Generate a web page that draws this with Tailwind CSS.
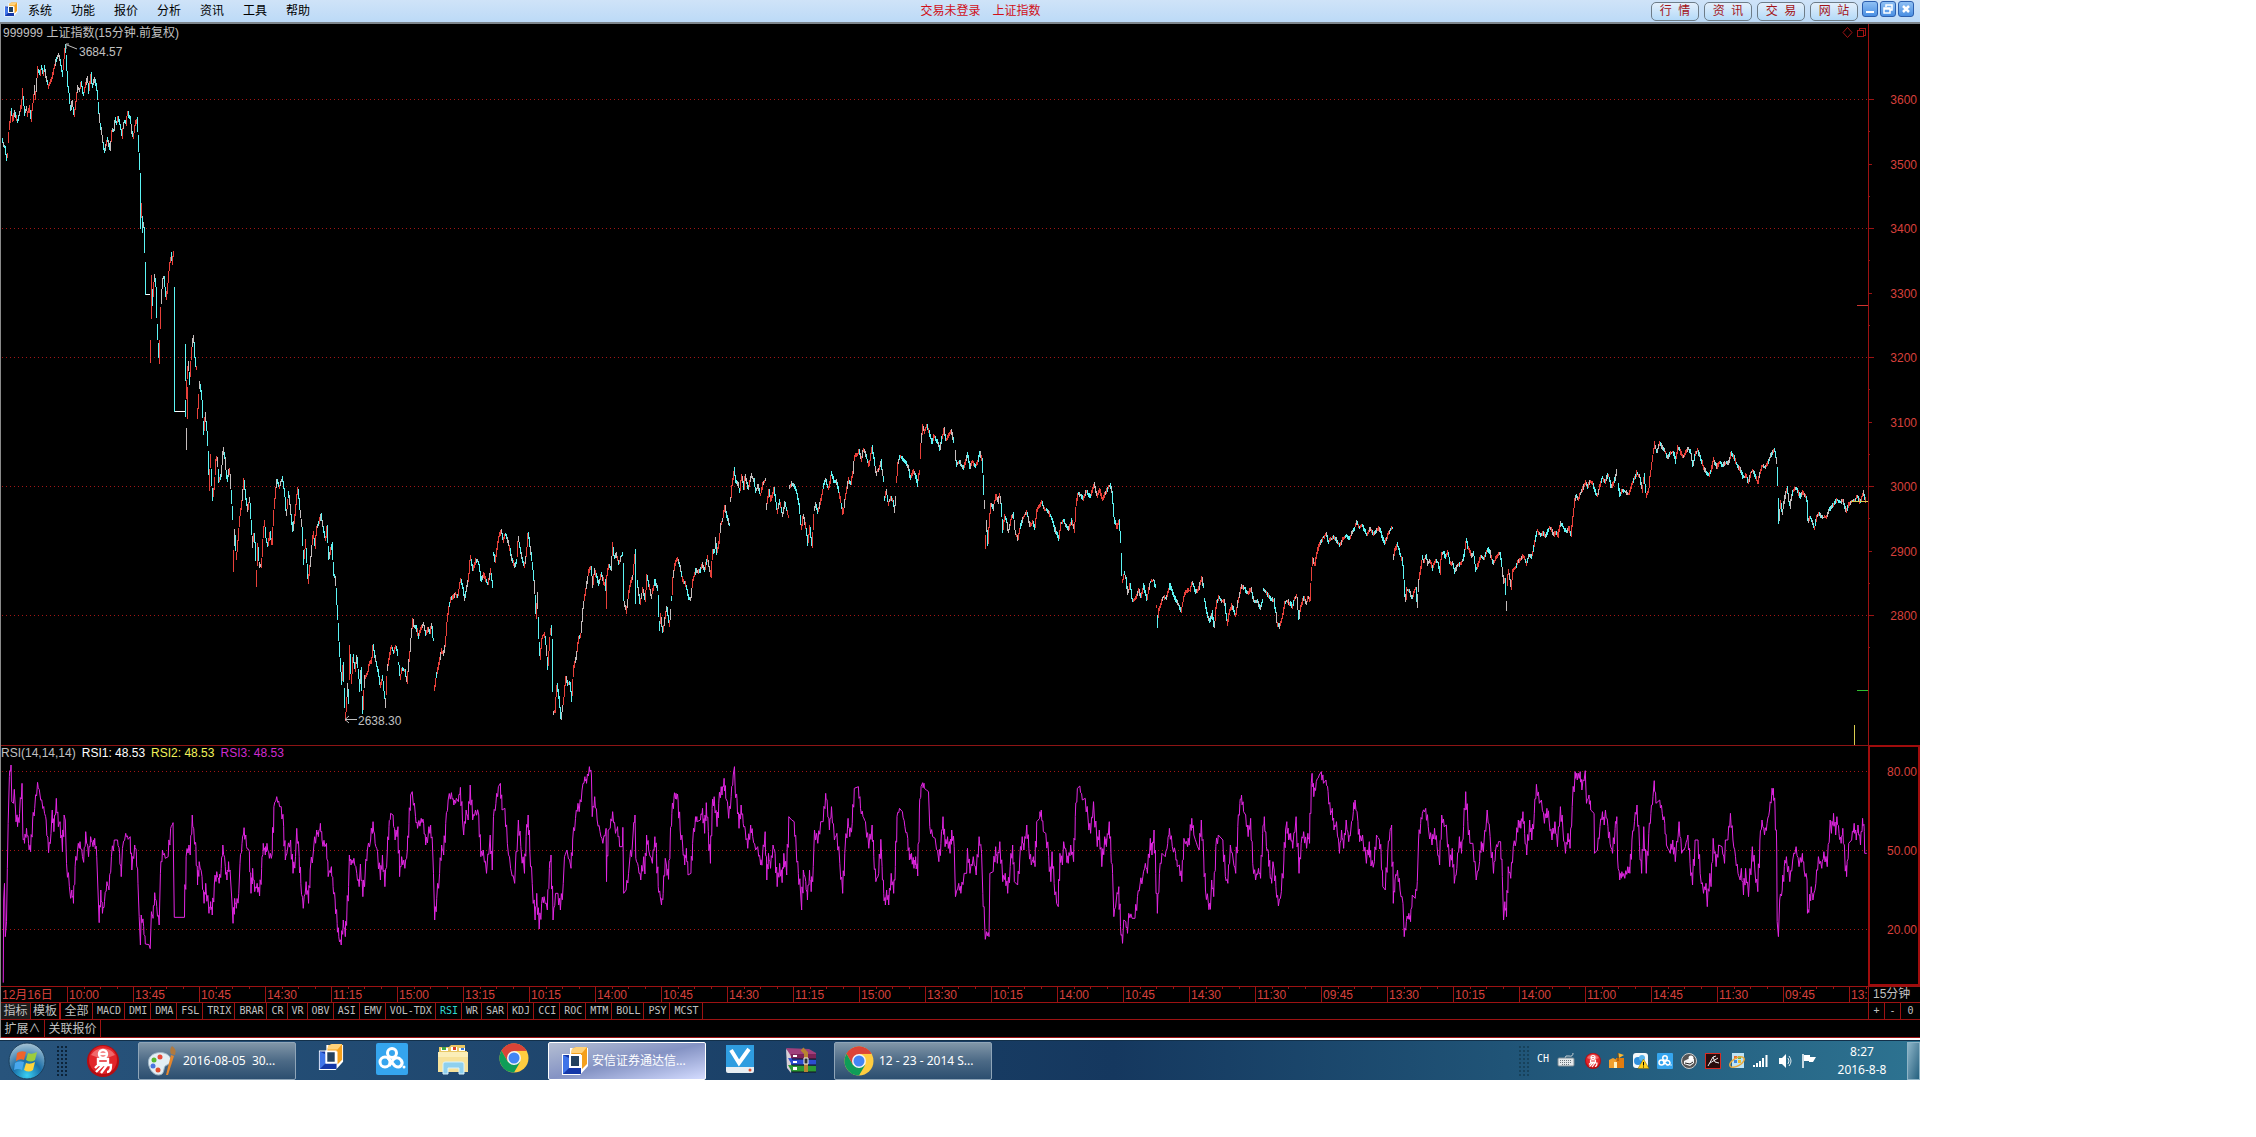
<!DOCTYPE html>
<html lang="zh-CN">
<head>
    <meta charset="UTF-8">
    <meta name="viewport" content="width=device-width, initial-scale=1.0">
    <title>上证指数 15分钟</title>
    <script src="https://cdn.jsdelivr.net/npm/@tailwindcss/browser@4"></script>
</head>
<body class="bg-white">

<!-- Shared icons -->
<svg class="hidden">
    <symbol id="icon-tdx" viewBox="0 0 28 30">
        <path d="M1 8H9V2H27V20L19 29H1Z" fill="#fff"/>
        <path d="M11 3L15 1H26V18L21 23V9H10Z" fill="#f5a01c"/>
        <path d="M11 3L15 1H26L21 7H10Z" fill="#ffd27a"/>
        <path d="M2 9H8V22H20V28H2Z" fill="#1437a8"/>
        <path d="M2 9L8 12V22L2 28Z" fill="#3f74e8"/>
        <path d="M9 9H19V21H9Z" fill="#24415f"/>
        <path d="M9 9H19V21H9Z" fill="none" stroke="#fff" stroke-width="2"/>
    </symbol>
    <symbol id="icon-chrome" viewBox="0 0 30 30">
        <circle cx="15" cy="15" r="14.500" fill="#ffcd40"/>
        <path d="M15 15L2.500 7.700A14.500 14.500 0 0 1 27.500 7.700H15Z" fill="#db4437"/>
        <path d="M15 7.700H27.500A14.500 14.500 0 0 0 2.500 7.700L8.700 18.600Z" fill="#db4437"/>
        <path d="M2.500 7.700A14.500 14.500 0 0 0 15 29.500L21.300 18.700L15 21.500L8.700 18.600Z" fill="#0f9d58"/>
        <circle cx="15" cy="15" r="7" fill="#f4f4f4"/>
        <circle cx="15" cy="15" r="5.500" fill="#4285f4"/>
    </symbol>
    <symbol id="icon-pan" viewBox="0 0 32 32">
        <rect width="32" height="32" rx="2" fill="#35a5ee"/>
        <g fill="none" stroke="#fff" stroke-width="3">
            <circle cx="16" cy="10" r="4.500"/>
            <circle cx="9" cy="19" r="5"/>
            <path d="M12 15L19 23C24 26 28 21 25 17C23 14 19 14 17 17L13 23"/>
        </g>
        <circle cx="28" cy="24" r="1.500" fill="#fff"/>
    </symbol>
    <symbol id="icon-yi" viewBox="0 0 32 32">
        <circle cx="16" cy="16" r="16" fill="#b50d12"/>
        <circle cx="16" cy="15" r="14" fill="#e2252a"/>
        <path d="M4 10A14 14 0 0 1 28 10Q16 16 4 10" fill="#f0696b"/>
        <g fill="none" stroke="#fff" stroke-width="2.400">
            <circle cx="16" cy="9" r="4"/>
            <path d="M12 9H19M11 14H21V18H11ZM12 19L8 23M10 20H24Q24 27 20 27M16 20L9 27M20 20L14 28"/>
        </g>
    </symbol>
</svg>

<div class="h-screen min-h-[700px] pr-[336px] pb-[57px] flex flex-col">
<div class="flex-1 min-h-0 flex flex-col font-['Liberation_Sans','Noto_Sans_CJK_SC',sans-serif] text-[12px] leading-4">

    <!-- Menu bar -->
    <header class="h-6 flex-none flex items-center border-b-2 border-[#7d858c] bg-linear-to-b from-[#cfe3f8] to-[#bcdaf7] text-black">
        <svg class="w-[14px] h-[15px] ml-1 mb-1" viewBox="0 0 28 30"><use href="#icon-tdx"/></svg>
        <nav class="flex gap-[19px] ml-[10px]">
            <button>系统</button>
            <button>功能</button>
            <button>报价</button>
            <button>分析</button>
            <button>资讯</button>
            <button>工具</button>
            <button>帮助</button>
        </nav>
        <div class="flex-1 flex justify-center gap-3 text-[#d01018]">
            <span>交易未登录</span>
            <span>上证指数</span>
        </div>
        <div class="flex gap-[5px] mr-1 text-[#a31418]">
            <button class="w-12 h-[19px] border border-[#6d7c88] rounded-[5px] bg-linear-to-b from-[#e3effb] to-[#b4daf8]">行&nbsp;&nbsp;情</button>
            <button class="w-12 h-[19px] border border-[#6d7c88] rounded-[5px] bg-linear-to-b from-[#e3effb] to-[#b4daf8]">资&nbsp;&nbsp;讯</button>
            <button class="w-12 h-[19px] border border-[#6d7c88] rounded-[5px] bg-linear-to-b from-[#e3effb] to-[#b4daf8]">交&nbsp;&nbsp;易</button>
            <button class="w-12 h-[19px] border border-[#6d7c88] rounded-[5px] bg-linear-to-b from-[#e3effb] to-[#b4daf8]">网&nbsp;&nbsp;站</button>
        </div>
        <div class="flex gap-[2px] mr-[6px] mb-1">
            <button aria-label="minimize" class="size-4 border border-[#2c5fae] rounded-[3px] bg-linear-to-b from-[#8fc0f4] to-[#4a8fe2]">
                <svg viewBox="0 0 14 14"><path d="M3 10H11" stroke="#fff" stroke-width="2"/></svg>
            </button>
            <button aria-label="restore" class="size-4 border border-[#2c5fae] rounded-[3px] bg-linear-to-b from-[#8fc0f4] to-[#4a8fe2]">
                <svg viewBox="0 0 14 14"><path d="M5 5V3H11V8H9M3 6H9V11H3ZM3 7H9" fill="none" stroke="#fff" stroke-width="1.500"/></svg>
            </button>
            <button aria-label="close" class="size-4 border border-[#2c5fae] rounded-[3px] bg-linear-to-b from-[#8fc0f4] to-[#4a8fe2]">
                <svg viewBox="0 0 14 14"><path d="M4 4L10 10M10 4L4 10" stroke="#fff" stroke-width="2.500"/></svg>
            </button>
        </div>
    </header>

    <main class="flex-1 min-h-0 flex flex-col bg-black border-l border-[#8a8a8a] text-[#c0c0c0]">
        <!-- Price chart -->
        <section class="flex-1 min-h-0 flex relative">
            <h1 class="absolute left-[2px] top-px z-10">999999 上证指数(15分钟.前复权)</h1>
            <svg id="price-chart" class="flex-1 min-w-0 h-full block" viewBox="1 24 1867 721" preserveAspectRatio="none"></svg>
            <svg id="price-axis" class="w-[52px] h-full block" viewBox="1868 24 52 721" preserveAspectRatio="none"></svg>
        </section>

        <!-- RSI chart -->
        <section class="h-[241px] flex-none flex relative">
            <div class="absolute left-0 top-0 z-10 flex gap-[6px]">
                <span>RSI(14,14,14)</span>
                <span class="text-white">RSI1: 48.53</span>
                <span class="text-[#f2f25a]">RSI2: 48.53</span>
                <span class="text-[#cf2bcf]">RSI3: 48.53</span>
            </div>
            <svg id="rsi-chart" class="flex-1 min-w-0 h-full block border-t border-[#8c1414]" viewBox="1 746 1867 240" preserveAspectRatio="none"></svg>
            <div class="w-[52px] border-2 border-[#a00c0c] flex-none">
                <svg id="rsi-axis" class="size-full block" viewBox="1870 747 48 237" preserveAspectRatio="none"></svg>
            </div>
        </section>

        <!-- Time axis -->
        <div class="h-4 flex-none flex border-t border-[#9c1212]">
            <svg id="time-axis" class="flex-1 min-w-0 h-full block" viewBox="1 987 1867 15" preserveAspectRatio="none"></svg>
            <div class="w-[52px] border-l border-[#9c1212] pl-1 leading-[15px]">15分钟</div>
        </div>

        <!-- Indicator tabs -->
        <div class="h-[17px] flex-none flex border-t border-[#9c1212] leading-4">
            <nav id="tabs" class="flex-1 flex font-['DejaVu_Sans_Mono','Noto_Sans_CJK_SC',monospace] text-[10px]">
                <button class="w-[30px] border-r border-[#9c1212] bg-[#1c1c1c] text-[12px]">指标</button>
                <button class="w-[30px] border-r-2 border-[#b01414] text-[12px]">模板</button>
                <button class="w-8 border-r border-[#9c1212] text-[12px]">全部</button>
            </nav>
            <div class="w-[52px] flex border-l border-[#9c1212] font-['DejaVu_Sans_Mono',monospace] text-[10px]">
                <button class="w-4 border-r border-[#9c1212]">+</button>
                <button class="w-4 border-r border-[#9c1212]">-</button>
                <button class="flex-1">0</button>
            </div>
        </div>
        <div class="h-[19px] flex-none flex border-y border-[#9c1212]">
            <button class="w-11 border-r border-[#9c1212]">扩展∧</button>
            <button class="w-14 border-r border-[#9c1212]">关联报价</button>
        </div>
    </main>

    <!-- Taskbar -->
    <footer class="h-10 mt-[2px] flex-none flex items-center border-t border-[#12304a] bg-linear-to-r from-[#28547c] via-[#15385f] via-58% to-[#2d7391] text-white font-['Noto_Sans','Noto_Sans_CJK_SC',sans-serif]">
        <button aria-label="start" class="w-[53px] flex justify-center">
            <svg class="size-[38px]" viewBox="0 0 38 38">
                <defs>
                    <radialGradient id="orb" cx=".5" cy=".9" r=".9">
                        <stop offset="0" stop-color="#39d0f2"/>
                        <stop offset=".45" stop-color="#1a6ea8"/>
                        <stop offset="1" stop-color="#a9c4d4"/>
                    </radialGradient>
                </defs>
                <circle cx="19" cy="19" r="18" fill="url(#orb)" stroke="#1c3f5c" stroke-width="1"/>
                <path d="M9 11Q13 8 18 10L16 18Q12 16 8 19Z" fill="#f0642a"/>
                <path d="M20 11Q24 13 29 10L27 18Q23 21 18 18Z" fill="#9ccc3c"/>
                <path d="M7 21Q11 18 16 20L14 28Q10 26 6 28Z" fill="#48a8ee"/>
                <path d="M18 21Q22 23 27 20L25 28Q21 31 16 28Z" fill="#ffd43c"/>
            </svg>
        </button>
        <svg class="w-[10px] h-[32px] ml-1" viewBox="0 0 10 32"><path d="M1 1V32M5 1V32M9 1V32" stroke="#0c2338" stroke-width="2" stroke-dasharray="2 2"/></svg>
        <button aria-label="易信" class="w-[71px] flex justify-center"><svg class="size-8"><use href="#icon-yi"/></svg></button>
        <button class="w-[158px] h-[38px] flex items-center gap-[6px] pl-2 border border-[#8fa5b8] rounded-[2px] bg-linear-to-b from-[#8196a8] via-[#4c6a86] to-[#2c4f70]">
            <svg class="size-[30px]" viewBox="0 0 30 30">
                <path d="M2 20C-1 10 8 5 17 7C25 9 26 17 20 19C16 20 18 25 15 28C10 31 4 27 2 20Z" fill="#e4eef4" stroke="#9fb6c6"/>
                <circle cx="7" cy="14" r="2.500" fill="#58b830"/>
                <circle cx="13" cy="11" r="2.500" fill="#e84a3a"/>
                <circle cx="6" cy="20" r="2.500" fill="#4a74e0"/>
                <circle cx="11" cy="24" r="2.500" fill="#e04c30"/>
                <path d="M19 29L24 9L27 10L21 29Z" fill="#e5862c"/>
                <path d="M24 8Q22 3 25 0Q30 3 28 9Z" fill="#b07a40"/>
            </svg>
            <span class="whitespace-pre">2016-08-05  30...</span>
        </button>
        <div class="flex mx-1">
            <button aria-label="通达信" class="w-[61px] flex justify-center"><svg class="w-[26px] h-[28px] mb-2"><use href="#icon-tdx"/></svg></button>
            <button aria-label="网盘" class="w-[61px] flex justify-center"><svg class="size-8"><use href="#icon-pan"/></svg></button>
            <button aria-label="资源管理器" class="w-[61px] flex justify-center">
                <svg class="size-8" viewBox="0 0 32 32">
                    <path d="M2 4H12L14 2H28V8H30V29H2Z" fill="#e9c765"/>
                    <path d="M4 5H11V8H4ZM14 4H20V8H14ZM22 5H28V8H22Z" fill="#fff"/>
                    <path d="M5 4H9V7H5Z" fill="#3fa548"/>
                    <path d="M16 4H19V7H16Z" fill="#d8402c"/>
                    <path d="M24 5H27V7H24Z" fill="#3c7be0"/>
                    <path d="M1 9H31V29H1Z" fill="#f7e29a"/>
                    <path d="M1 9H31V14H1Z" fill="#fbeeb8"/>
                    <path d="M6 31V21Q6 19 8 19H25Q27 19 27 21V31H22V25H11V31Z" fill="#8fd0ee" stroke="#d8f2fc"/>
                </svg>
            </button>
            <button aria-label="Chrome" class="w-[61px] flex justify-center"><svg class="size-[30px]"><use href="#icon-chrome"/></svg></button>
        </div>
        <button class="w-[158px] h-[38px] flex items-center gap-[3px] pl-3 border border-white rounded-[2px] bg-linear-to-br from-[#b4bed2] via-[#8593c4] to-[#d4dcff]">
            <svg class="w-[28px] h-[30px]"><use href="#icon-tdx"/></svg>
            <span>安信证券通达信...</span>
        </button>
        <div class="flex mx-[3px]">
            <button aria-label="V" class="w-[61px] flex justify-center">
                <svg class="size-7" viewBox="0 0 28 28">
                    <rect width="28" height="28" rx="2" fill="#e8eef2"/>
                    <path d="M0 0H28V22H0Z" fill="#2f9de0"/>
                    <path d="M5 5L13 18L23 4" fill="none" stroke="#fff" stroke-width="4"/>
                    <circle cx="24" cy="25" r="1.500" fill="#e05030"/>
                </svg>
            </button>
            <button aria-label="WinRAR" class="w-[61px] flex justify-center">
                <svg class="size-8" viewBox="0 0 32 32">
                    <path d="M1 4L6 8V28L2 23Z" fill="#d8d0d8"/>
                    <path d="M1 3L24 4L31 8V13H7Z" fill="#a0407c"/>
                    <path d="M6 9H31V14H6Z" fill="#7c2458"/>
                    <path d="M3 13L31 15V20H7Z" fill="#2c4cd0"/>
                    <path d="M3 20L31 21V27H7Z" fill="#2c9a34"/>
                    <path d="M7 14H31M7 20H31M7 27H31" stroke="#101020"/>
                    <path d="M8 10H12V12H8ZM8 16H12V18H8ZM8 22H12V25H8Z" fill="#fff"/>
                    <path d="M17 4L21 8V27" fill="none" stroke="#b88430" stroke-width="4"/>
                    <path d="M19 13H23V19H19Z" fill="#303030" stroke="#eee"/>
                </svg>
            </button>
        </div>
        <button class="w-[158px] h-[38px] flex items-center gap-[5px] pl-[9px] border border-[#8fa5b8] rounded-[2px] bg-linear-to-b from-[#8196a8] via-[#4c6a86] to-[#2c4f70]">
            <svg class="size-[30px]"><use href="#icon-chrome"/></svg>
            <span>12 - 23 - 2014 S...</span>
        </button>

        <!-- Tray -->
        <div class="ml-auto flex items-center">
            <svg class="w-[10px] h-[32px] mr-2" viewBox="0 0 10 32"><path d="M1 1V32M5 1V32M9 1V32" stroke="#17425c" stroke-width="2" stroke-dasharray="2 2"/></svg>
            <span class="font-['DejaVu_Sans_Mono',monospace] text-[10px] mr-2 mb-1">CH</span>
            <div class="flex gap-2">
                <svg class="w-[18px] h-4 mr-[2px]" viewBox="0 0 18 16"><path d="M8 5Q8 2 12 3T16 0" fill="none" stroke="#c8d0d4"/><rect x="1" y="5" width="16" height="8" rx="1" fill="#e4e8ea" stroke="#7f8c94"/><path d="M3 7.500H15M3 9.500H15M5 11.500H13" stroke="#6a757c" stroke-dasharray="1 1"/></svg>
                <svg class="size-4"><use href="#icon-yi"/></svg>
                <svg class="size-4" viewBox="0 0 16 16"><path d="M0 7L4 5L8 7V15H0Z" fill="#f0a030"/><path d="M7 5H15V15H7Z" fill="#e07c10"/><path d="M9 0L15 2L10 5Z" fill="#ffb830"/><path d="M9 0V8" stroke="#7a4a10"/><path d="M5 9H8V15H5Z" fill="#fff2c0"/></svg>
                <svg class="size-4" viewBox="0 0 16 16"><rect width="15" height="15" rx="3" fill="#f4f8fa"/><circle cx="5" cy="8" r="4" fill="#2f8fdc"/><circle cx="9" cy="5" r="3" fill="#58b4ec"/><path d="M10.500 6L16 15.500H5Z" fill="#ffd21c" stroke="#7d6206" stroke-width=".5"/><path d="M10.500 9V12.500M10.500 13.500V14.500" stroke="#000"/></svg>
                <svg class="size-4"><use href="#icon-pan"/></svg>
                <svg class="size-4" viewBox="0 0 16 16"><circle cx="8" cy="8" r="7.500" fill="#555" stroke="#ccc"/><path d="M3 8L7 6H13V10L9 13L3 11Z" fill="#f4f4f4"/><circle cx="10" cy="5" r="2.500" fill="#fff"/><path d="M4 10L9 11L12 9" stroke="#222" fill="none"/></svg>
                <svg class="size-4" viewBox="0 0 16 16"><rect x=".5" y=".5" width="15" height="15" fill="#2a0c0c" stroke="#d82c24"/><path d="M3 13L8 4L10 9L14 10M5 10L13 5M8 4L11 3" fill="none" stroke="#eee"/></svg>
                <svg class="size-4" viewBox="0 0 16 16"><rect x="3" y="0" width="12" height="15" fill="#bfe3f4"/><path d="M5 3H8V6H5Z" fill="#e86a30"/><path d="M9 3H12V6H9Z" fill="#6ab83c"/><path d="M5 7H8V10H5Z" fill="#3c86e0"/><path d="M9 7H12V10H9Z" fill="#f0c030"/><ellipse cx="8" cy="9" rx="8" ry="4" fill="none" stroke="#e8a83c" stroke-width="1.500" transform="rotate(-30 8 9)"/></svg>
                <svg class="size-4" viewBox="0 0 16 16"><path d="M1 14V12M4 14V10M7 14V8M10 14V5M13.500 14V2" stroke="#fff" stroke-width="2"/></svg>
                <svg class="size-4" viewBox="0 0 16 16"><path d="M2 5H5L9 1V15L5 11H2Z" fill="#fff"/><path d="M11 5Q13 8 11 11M12 3Q16 8 12 13" fill="none" stroke="#e4eef2"/></svg>
                <svg class="size-4" viewBox="0 0 16 16"><path d="M2 1V15" stroke="#fff" stroke-width="1.500"/><path d="M3 2H9V4H15L12 9H8V8H3Z" fill="#fff"/></svg>
            </div>
            <div class="w-[90px] text-center leading-[18px]"><div>8:27</div><div>2016-8-8</div></div>
            <button aria-label="show desktop" class="w-[13px] h-[38px] border border-[#8fb4c6] bg-linear-to-br from-[#8db5c8] to-[#23617f]"></button>
        </div>
    </footer>
</div>
</div>

<script>
    (function initCharts() {
        const RED = '#9c1212';
        const LABEL = '#d8403c';

        // Each block: left, top, horizontal units per pixel, and "x,y" points. "|" marks a gap between sessions.
        const UNITS_Y = 3;
        const priceBlocks = [
            [0, 0, 3, `8,415 10,435 15,440 20,475 22,460|25,420 28,375 30,360 34,330 38,360 44,335 48,350 53,365 60,330 64,315 68,268 70,300 74,340 80,320 83,345 88,318 93,358 100,300 104,255 106,290 110,250 113,205 120,222 125,200 130,225 133,200 138,230 146,258 152,240 158,225 163,200 170,175 176,160 182,185 188,225 193,160 196,132 199,180 203,250 207,280 212,330 216,300 222,345 228,300 233,260 238,270 244,245 250,285 256,255 262,230 266,275 274,218 276,260 284,235 290,260 293,280 296,330 300,370 306,405 314,455 322,415 330,448 336,385 342,390 345,355 350,370 354,350 360,375 366,410 372,360 378,370 383,335 388,350 392,350 394,390 400,408 406,370 412,355 414,410 418,470 420,520 422,685 425,615 428,690 431,670 433,685 434,755|436,785 437,883|452,1085 455,825 458,910 463,825 468,860 472,995 478,1088 480,985 484,890 488,835 492,830 498,895 502,870 508,800 514,760 517,790 520,757|523,860 524,1233|556,1032 558,1195 560,1150 565,1085 569,1150 575,1050 580,1005 584,1060 588,1100`],
            [180, 380, 2.8, `16,60 18,207 22,20|49,110 52,60 54,5 60,35 62,60 66,160 71,100 75,150 78,190 82,330 85,225 91,358 96,320 100,240 105,232 108,300 115,285 121,205 126,235 132,300 138,265 142,310 145,365 147,415|149,572 153,448 158,530 163,475 168,400 172,380 179,295 184,350 190,390 195,355 200,430 203,500 207,460 212,500 214,617 218,490 222,560 228,555 233,470 236,425 242,480 246,495 252,455 258,490 262,400 266,350 271,300 278,320 287,290 292,330 298,405 304,335 308,375 316,450 322,400 330,322 336,390 342,440 346,548 352,480 359,605 366,540 370,490 373,455 378,500 383,440 390,425 395,406 402,450 408,480 412,436 416,535 426,490 430,580 436,600 440,680 445,780 449,850 453,910 457,845 463,1020 470,910 472,965 475,795 480,905 485,825 490,870 495,830 500,880 503,930 507,860 512,1000 517,890 525,880 530,850 536,845 541,795 548,840 556,880 561,920 567,885 572,940 576,980 580,870 586,830 592,795 598,815 604,795 610,820|613,850 616,895 622,865 630,870 636,905 640,850 644,810 648,760 652,720 656,740 662,740 668,770 675,740 683,730 688,765 694,745 700,755 705,730 709,775|712,930 718,885 724,855 732,810 738,820 744,785 748,720 754,670 758,655 765,650 772,640 778,650 785,595 792,620 797,655 803,620 808,590 813,530 820,570 828,540 836,545 843,600 850,580 856,600 862,610 870,570 875,615|878,520 882,545 887,510 893,470 900,450 905,480 911,460 920,490 928,530 937,560 943,540 947,470 955,520 964,560 970,520 975,455 982,510 989,570 993,620 997,710 1001,635 1004,760 1008,835 1014,770 1020,760 1026,800 1030,865 1036,760 1040,740 1043,800 1045,1000 1050,990 1056,910 1062,960 1067,1015 1074,960 1080,890 1086,910 1092,905 1097,958 1102,860 1110,830 1116,770 1122,770 1127,700 1132,650 1138,620 1145,570 1152,560 1156,620 1160,570 1167,590 1173,610 1180,580 1188,610 1192,600 1194,685 1195,585 1200,555 1208,565 1211,490 1216,530 1222,520 1228,550 1234,530 1240,520 1243,660 1250,695 1256,640 1262,605 1268,590 1275,508 1276,670|1280,600 1288,670 1296,625 1303,660 1307,585 1314,620 1320,650 1330,600 1338,625 1342,750 1346,705 1352,755 1358,710 1363,680 1370,735 1374,690|1377,655 1380,590 1386,550 1393,532 1400,560 1408,600 1416,610 1424,650 1430,660 1436,600 1444,570 1450,575 1456,567`],
            [700, 400, 2.613, `0,515 6,490 12,510 19,470 24,500 29,530 33,450 38,455 41,415 44,460 50,425 54,375 60,355 65,315 71,350 77,375|80,300 83,265 89,208 94,245 100,250 104,275 109,225 115,265 118,225 126,265 134,225 142,240 145,275 152,255 158,285 165,250 171,237|173,325 180,270 185,300 194,262 202,335 208,300 216,345 222,305 230,345|233,260 240,250 248,260 254,280 260,320 265,385 270,345 276,375 282,430 287,380 293,440 298,330 302,310 308,335 316,300 322,260 328,235 336,265 344,218 350,240 358,245 365,285 374,340 380,290 388,235 394,250 400,215 404,165 412,160 416,150 422,180 427,145 434,165 441,195 450,140 455,175 460,220 468,205 473,180 480,240|482,295 487,270 492,310 500,290 505,305 509,330 511,290|514,240 517,190 522,165 530,175 538,185 545,205 550,235 558,210 565,230 569,252 573,212|575,170 578,125 582,78 587,95 592,72 600,100 606,125 612,105 620,125 627,145 632,115 638,85 643,120 650,105 657,90 663,125|667,150 670,195 678,180 687,205 694,185 699,158 705,200 712,180 720,200 726,180 731,152 737,180 740,225 743,320|746,440 749,360 752,435 756,365 760,310 766,325 773,285 780,305 782,278 787,310 791,395 796,345 801,360 806,395 812,360 819,338 824,400 831,415 838,375 845,350 854,335 862,375 870,365 875,385 880,330 888,315 893,305 900,325 908,330 916,345 922,365 930,395 938,415 943,370 950,358 958,380 964,385 972,360 978,390 983,310 988,280 996,285 1002,295 1010,270 1020,290 1030,250 1038,290 1044,265 1052,300 1060,275 1068,260 1073,255 1078,285 1082,355 1089,380 1096,360 1099,425|1101,460 1103,545 1109,515 1114,540 1118,580 1124,550 1130,600 1140,590 1147,570 1152,590 1160,555 1168,600 1176,545 1186,538 1190,560|1194,620 1195,680 1198,630 1204,610 1210,590 1218,595 1228,552 1236,580 1245,600 1258,630 1266,580 1272,570 1280,570 1287,545 1295,575 1303,565 1311,530 1316,560|1318,595 1325,640 1332,665 1338,635 1344,680 1350,605 1356,590 1362,600 1370,600 1378,670 1384,630 1390,615 1400,645 1408,590 1415,555 1424,565 1432,580 1440,565 1448,605 1456,600 1464,625 1470,600|1473,565 1482,580 1492,595 1500,600 1504,630 1508,670 1514,680 1522,650 1528,605 1536,600 1541,615`],
            [1290, 420, 2.45, `0,545 6,560 10,540 17,525 21,595 26,560 34,530 40,550 45,530 49,540 51,490 54,430 56,412 61,435 65,400 71,375 76,365 82,350 89,340 94,365 100,355 108,350 114,360 122,375 130,355 138,345 146,355 153,335 158,325 163,305 170,320 178,315 188,345 196,325 204,340 212,330 218,320 224,340 232,370 238,350 244,330 250,322|253,415 257,390 263,372 270,400 276,420 279,470 281,520 284,540 286,505 294,515 300,535 305,510 309,505 312,560 315,480 320,450 324,410 328,425 333,405 338,430 344,420 349,445 356,420 362,425 368,458 371,400 376,395 381,408 387,395 393,430 400,430 403,458 410,435 418,430 424,415 428,400 432,355 436,380 444,405 450,400 455,448 462,430 468,405 476,415 484,385 490,395 498,430 506,410 514,395 518,420 523,485 528,475 530,568|532,490 535,450 540,485 542,505 546,450 552,440 560,420 568,412 573,405 579,430 586,405 592,410 598,375 603,345 606,330 614,345 620,335 626,348 634,325 640,320 646,345 652,335 657,345 663,308 670,320 678,335 684,322 689,345 693,290 697,245 701,225 706,238 711,220 716,210 724,185 730,200 736,180 742,190 748,215 753,225 758,205 765,170 772,185 780,162 787,200 794,185 801,152|804,190 808,225 814,208 822,215 830,220 836,200 842,180 850,155 857,170 863,210 868,165 873,228 879,205 883,160 888,115 893,68 899,95 905,68 910,75 918,90 925,110 932,98 940,95 945,122 950,80 957,95 963,108 970,95 976,85 982,95 987,135 993,100 999,90 1006,115 1012,135 1018,155 1026,165 1032,150 1038,118 1046,140 1052,125 1060,135 1067,125 1074,130 1081,98 1088,110 1096,135 1104,150 1110,170 1118,165 1123,185 1130,155 1136,150 1146,188 1152,155 1157,135 1165,140 1172,125 1178,105 1186,88 1190,100 1193,130 1195,190|1197,235 1198,310 1202,240 1206,280 1212,235 1218,200 1222,240 1225,260 1230,220 1238,200 1244,210 1250,230 1256,215 1262,225 1267,240 1269,300 1275,290 1285,325 1290,290 1297,280 1305,290 1315,290 1322,265 1330,255 1340,238 1348,245 1355,240 1363,272 1370,250 1378,240 1385,240 1390,225 1396,245 1405,215 1411,243`],
        ];
        const rsiBlocks = [
            [0, 740, 2.45, `8,728 9,480 11,430 13,590 16,545 18,385 20,250 23,110 27,75 29,185 33,190 35,148 38,210 43,260 48,220 54,130 56,285 60,310 65,265 70,310 75,335 80,240 85,205 92,127 98,165 104,195 108,210 113,240 119,338 125,280 128,210 132,275 138,175 143,260 147,245 153,335 157,225 160,240 163,370 170,440 173,475 176,450 180,490 184,380 190,330 196,305 202,350 205,367 210,275 217,350 222,290 228,320 232,295 237,350 240,450 243,548 247,450 251,520 256,485 262,425 267,450 273,350 280,300 288,300 293,340 297,410 300,325 308,280 314,298 319,290 323,390 330,315 334,335 338,430 341,530 344,615 346,525 352,560 356,612 365,614 368,626 371,515 375,535 379,458 384,500 390,555 393,400 398,330 405,355 412,350 418,265 424,248 427,532 452,532 456,350 463,315 466,345 471,225 476,300 480,320 484,435 488,365 495,410 500,490 504,430 512,520 516,485 520,525 525,435 531,395 537,430 542,385 546,315 552,380 556,420 560,365 565,420 568,480 571,550 575,475 579,505 585,460 588,370 593,310 598,263 604,320 611,335 615,460 619,385 624,455 630,430 636,468 641,385 645,310 650,345 654,310 660,355 667,340 671,200 678,170 685,200 689,200 695,260 699,360 704,330 712,300 718,400 724,350 727,265 733,350 737,430 743,505 750,425 756,490 760,390 768,330 776,270 780,290 785,250 789,300 796,320 800,310 804,410 812,380 816,440 821,480 826,550 830,590 836,615 841,540 846,590 850,510 854,440 856,345 860,375 867,355 874,400 880,440 883,372 889,470 895,390 900,330 908,300 914,245 919,310 925,335 932,420 937,345 943,440 949,330 953,260 957,220 963,225 968,300 975,260 979,410 984,350 992,385 998,330 1002,250 1006,165 1010,155 1018,230 1023,265 1032,235 1038,250 1043,315 1049,285 1055,255 1060,330 1062,400 1065,540 1070,475 1077,400 1082,315 1087,345 1092,250 1098,180 1106,158 1112,195 1118,175 1123,185 1128,142 1133,240 1136,285 1142,210 1147,240 1152,135 1158,240 1165,210 1173,225 1178,350 1184,330 1192,400 1201,285 1206,390 1209,230 1215,190 1221,140 1226,130 1230,210 1237,205 1243,310 1251,385 1261,430 1270,240 1276,320 1285,400 1289,290 1294,225 1298,330 1304,430 1311,540 1315,460 1321,567 1327,490 1333,470 1341,510 1346,385 1350,345 1355,540 1361,460 1367,460 1373,510 1380,430 1383,350 1389,330 1399,385 1403,300 1410,235 1416,190 1419,215 1426,150 1433,110 1437,130 1444,80 1449,105 1451,230 1457,170 1463,240 1470,275 1477,310 1485,265 1486,425 1490,270 1495,265 1501,215 1508,280 1513,260 1518,320 1525,320 1526,262 1528,460 1534,450 1540,400`],
            [630, 750, 2.412, `0,320 5,300 8,240 12,195 14,325 20,350 26,390 33,320 36,372 40,255 45,300 54,340 60,260 64,310 68,410 73,440 76,465 80,430 85,325 88,345 93,388 97,270 101,190 106,145 111,130 116,150 121,240 127,285 132,345 136,295 140,375 147,370 151,280 158,200 162,215 170,210 175,175 180,250 184,158 189,245 194,340 198,175 203,140 210,230 214,160 220,110 222,135 227,85 231,145 235,155 238,205 244,140 249,75 252,50 254,130 258,145 263,235 268,165 273,220 278,240 284,295 291,225 296,260 303,300 308,290 315,345 319,330 326,245 330,390 334,310 339,355 345,285 350,310 355,410 361,340 367,398 371,310 378,375 383,200 390,210 396,215 401,300 406,370 411,420 414,480 418,360 424,395 428,450 433,360 437,425 442,350 445,240 453,280 460,215 466,215 472,130 476,165 481,240 486,170 493,270 499,250 506,340 513,430 518,310 526,205 530,260 536,220 541,115 551,110 556,175 562,200 568,215 576,295 584,225 588,320 593,395 600,370 605,268 608,350 612,430 616,465 619,420 624,465 630,370 636,430 640,350 644,200 650,175 657,185 663,230 670,265 674,330 679,310 685,355 689,320 694,378 698,180 702,110 706,98 710,115 715,120 720,125 723,230 730,260 736,265 745,335 750,280 755,200 760,290 766,260 772,310 776,240 782,290 785,440 793,400 798,430 806,370 812,370 814,295 820,370 828,320 835,375 842,260 848,310 851,430 855,510 857,568 860,545 866,560 868,370 876,365 882,290 886,340 892,275 899,395 905,370 911,430 917,350 923,285 927,395 935,405 940,330 946,260 950,300 957,225 962,295 968,345 973,320 977,350 981,215 988,205 992,180 997,245 1003,250 1010,320 1015,395 1018,305 1023,400 1029,460 1033,470 1037,310 1043,345 1046,275 1053,315 1057,340 1063,285 1070,335 1074,200 1079,115 1085,108 1091,150 1098,145 1105,210 1111,250 1118,155 1127,290 1132,240 1138,350 1145,260 1149,290 1156,215 1160,310 1164,370 1167,500 1173,450 1179,410 1183,530 1188,580 1191,510 1196,515 1200,550 1203,490 1211,505 1218,505 1224,440 1230,405 1237,380 1243,340 1248,370 1255,265 1259,315 1264,240 1268,370 1272,490 1277,370 1283,310 1291,320 1297,280 1301,235 1308,290 1316,310 1320,350 1325,345 1331,395 1336,265 1345,290 1350,260 1355,205 1360,255 1369,290 1373,300 1378,210 1384,330 1388,420 1395,460 1400,478 1403,390 1408,440 1413,290 1419,255 1430,270 1436,380 1442,400 1448,285 1455,330 1461,370 1466,230 1471,160 1475,135 1480,185 1485,195 1491,260 1497,205 1502,340 1509,390 1516,355 1521,385 1526,250 1530,200 1535,290 1540,310`],
            [1270, 740, 2.376, `0,400 4,430 7,365 10,390 14,440 20,498 27,455 33,360 37,270 40,245 44,300 49,280 54,325 62,230 69,400 74,310 80,275 87,325 90,280 94,310 98,130 100,100 104,170 110,125 117,105 122,95 127,130 133,120 138,155 144,225 148,205 152,270 158,245 165,340 170,270 175,325 181,240 187,305 192,270 198,215 202,180 209,245 213,305 220,285 229,370 236,305 240,378 248,365 253,285 260,300 264,340 268,440 274,450 280,330 285,275 289,255 293,490 297,420 303,390 309,450 316,490 319,590 324,545 330,520 334,545 338,465 345,475 350,425 353,300 358,250 362,220 370,205 376,260 385,315 391,265 397,320 403,375 408,225 414,260 419,255 427,380 433,325 438,430 444,385 450,290 455,340 460,260 465,155 470,245 475,310 482,310 490,420 498,365 502,305 507,335 516,210 523,290 531,400 536,330 543,305 548,305 552,410 555,540 558,485 562,530 566,380 572,415 578,320 585,300 590,240 596,265 601,215 605,280 610,345 617,240 622,300 628,220 633,133 640,190 645,180 652,250 658,205 663,240 670,300 677,245 683,320 690,200 696,270 702,340 708,280 713,325 718,200 725,95 730,120 737,95 741,150 749,92 752,190 758,165 762,210 770,220 771,340 778,330 784,260 790,215 794,255 797,210 803,260 808,310 814,340 820,265 824,230 826,360 831,420 836,395 843,415 850,380 855,400 860,300 866,245 872,195 878,320 883,400 888,260 894,400 900,280 905,220 910,170 913,122 917,190 926,180 932,220 938,250 942,315 951,340 957,300 963,365 972,245 978,340 987,320 993,285 998,370 1004,435 1010,300 1017,300 1022,400 1030,460 1036,430 1039,500 1045,400 1048,440 1053,295 1060,380 1066,315 1074,320 1080,370 1082,300 1088,300 1094,220 1100,300 1106,350 1112,400 1117,420 1120,385 1125,465 1130,385 1137,470 1146,320 1152,390 1159,455 1164,300 1169,240 1175,285 1181,250 1187,210 1192,165 1196,145 1200,210 1204,330 1205,545 1208,590 1211,480 1217,450 1222,380 1227,350 1235,425 1242,360 1250,320 1257,380 1265,340 1269,390 1276,420 1277,520 1281,505 1286,440 1290,480 1297,430 1303,350 1311,385 1316,335 1324,380 1331,240 1334,280 1339,220 1344,285 1347,230 1352,280 1357,310 1361,265 1366,360 1370,410 1375,310 1382,300 1388,250 1393,300 1397,255 1403,315 1408,235 1412,275 1413,340 1418,340`],
        ];

        function toRuns(blocks) {
            return blocks.flatMap(([left, top, unitsX, data]) => data.split('|').map(run =>
                run.trim().split(/\s+/).map(p => {
                    const [x, y] = p.split(',').map(Number);
                    return [left + x / unitsX, top + y / UNITS_Y];
                })));
        }

        // Repeatable jitter between 0 and 1
        function jitter(n) {
            const v = Math.sin(n * 12.9898) * 43758.5453;
            return v - Math.floor(v);
        }

        function grid(ys) {
            return ys.map(y => `<path d="M2 ${y}.5H1868" stroke="#a31616" stroke-dasharray="1 3"/>`).join('');
        }

        // One-pixel bars: falling is cyan, rising is red, flat is grey
        function drawBars(runs) {
            const paths = { '#5cf4f4': '', '#e8403a': '', '#c4bcbc': '' };
            runs.forEach(run => {
                const bars = {};
                for (let i = 0; i < run.length - 1; i++) {
                    const [x1, y1] = run[i], [x2, y2] = run[i + 1];
                    const steps = Math.max(1, Math.ceil((x2 - x1) * 4));
                    for (let s = 0; s <= steps; s++) {
                        const x = Math.floor(x1 + (x2 - x1) * s / steps);
                        const y = y1 + (y2 - y1) * s / steps;
                        const b = bars[x] || (bars[x] = { open: y, hi: y, lo: y });
                        b.close = y;
                        b.hi = Math.min(b.hi, y);
                        b.lo = Math.max(b.lo, y);
                    }
                }
                Object.entries(bars).forEach(([x, b]) => {
                    const n = Number(x), move = b.close - b.open;
                    const wick = b.lo - b.hi > 15 ? 0 : 2;
                    const hi = Math.round(b.hi - jitter(n) * wick);
                    const lo = Math.round(b.lo + 1 + jitter(n + 500) * wick);
                    const pick = jitter(n + 900);
                    let color = move > 0 ? '#5cf4f4' : '#e8403a';
                    if (Math.abs(move) < 12 && pick < 0.25) color = '#c4bcbc';
                    else if (Math.abs(move) < 4 && pick > 0.8) color = move > 0 ? '#e8403a' : '#5cf4f4';
                    paths[color] += `M${n + 0.5} ${hi}V${lo}`;
                });
            });
            return Object.entries(paths).map(([c, d]) => `<path d="${d}" stroke="${c}"/>`).join('');
        }

        function drawLine(runs) {
            const pts = runs.flat();
            let d = `M${pts[0][0]} ${pts[0][1]}`;
            for (let i = 1; i < pts.length; i++) {
                const [x1, y1] = pts[i - 1], [x2, y2] = pts[i];
                if (Math.abs(y2 - y1) > 4 && x2 - x1 > 1.5) {
                    const mx = (x1 + x2) / 2, my = (y1 + y2) / 2;
                    const swing = (jitter(i) - 0.3) * 5 * Math.sign(y2 - y1);
                    d += `L${mx - 0.5} ${my + swing}L${mx + 0.5} ${my - swing}`;
                }
                d += `L${x2} ${y2}`;
            }
            return `<path d="${d}" fill="none" stroke="#e326e3"/>`;
        }

        document.getElementById('price-chart').innerHTML = `
            <g shape-rendering="crispEdges">
                ${grid([99, 228, 357, 486, 615])}
                ${drawBars(toRuns(priceBlocks))}
                <path d="M146 294.5H150M175 411.5H185" stroke="#fff"/>
                <path d="M1857 305.5H1868" stroke="#d03430"/>
                <path d="M1857 690.5H1868" stroke="#2fc02f"/>
                <path d="M1854.5 725V745M1851 501.5H1868" stroke="#d8cc50"/>
                <path d="M1857 30H1863V36H1857ZM1859 30V28H1865V35H1863" transform="translate(0.5 0.5)" fill="none" stroke="#a01414"/>
            </g>
            <path d="M1847.500 27.500L1852 32.500L1847.500 37.500L1843 32.500Z" fill="none" stroke="#a01414"/>
            <g fill="none" stroke="#c0c0c0">
                <path d="M66 49V44H69M67 45L77 49"/>
                <path d="M357 719.500H345M349 716L345 719.500L349 723"/>
            </g>
            <g fill="#c0c0c0">
                <text x="79" y="56">3684.57</text>
                <text x="358" y="725">2638.30</text>
            </g>`;

        const levels = [[3600, 99], [3500, 164], [3400, 228], [3300, 293], [3200, 357], [3100, 422], [3000, 486], [2900, 551], [2800, 615]];
        document.getElementById('price-axis').innerHTML =
            `<path d="M1868.500 24V745M1868 745.500H1920" stroke="${RED}" shape-rendering="crispEdges"/>` +
            levels.map(([v, y], i) => `
                <path d="M1869 ${y}.5h${i % 2 ? 3 : 5}M1869 ${y + 32}.5h1" stroke="${RED}" shape-rendering="crispEdges"/>
                <text x="1917" y="${y + 5}" text-anchor="end" fill="${LABEL}">${v}</text>`).join('');

        document.getElementById('rsi-chart').innerHTML =
            `<g shape-rendering="crispEdges">${grid([771, 850, 929])}</g>` + drawLine(toRuns(rsiBlocks));
        document.getElementById('rsi-axis').innerHTML = [['80.00', 771], ['50.00', 850], ['20.00', 929]].map(([v, y]) =>
            `<text x="1917" y="${y + 5}" text-anchor="end" fill="${LABEL}">${v}</text>`).join('');

        const times = ['10:00', '13:45', '10:45', '14:30', '11:15', '15:00', '13:15', '10:15', '14:00', '10:45', '14:30', '11:15', '15:00', '13:30', '10:15', '14:00', '10:45', '14:30', '11:30', '09:45', '13:30', '10:15', '14:00', '11:00', '14:45', '11:30', '09:45', '13:'];
        let axis = `<text x="2" y="999" fill="${LABEL}">12月16日</text>`;
        times.forEach((t, i) => {
            const x = 67 + i * 66;
            axis += `<path d="M${x}.5 987V1002M${x + 17}.5 987v2M${x + 33}.5 987v2M${x + 50}.5 987v2" stroke="${RED}" shape-rendering="crispEdges"/>`;
            axis += `<text x="${x + 2}" y="999" fill="${LABEL}">${t}</text>`;
        });
        document.getElementById('time-axis').innerHTML = axis;

        const names = ['MACD', 'DMI', 'DMA', 'FSL', 'TRIX', 'BRAR', 'CR', 'VR', 'OBV', 'ASI', 'EMV', 'VOL-TDX', 'RSI', 'WR', 'SAR', 'KDJ', 'CCI', 'ROC', 'MTM', 'BOLL', 'PSY', 'MCST'];
        document.getElementById('tabs').insertAdjacentHTML('beforeend', names.map(n =>
            n === 'RSI'
                ? `<button class="pl-1 pr-[3px] border-r border-[#9c1212] text-[#30d8d0]">${n}</button>`
                : `<button class="pl-1 pr-[3px] border-r border-[#9c1212]">${n}</button>`).join(''));
    })();
</script>
</body>
</html>
